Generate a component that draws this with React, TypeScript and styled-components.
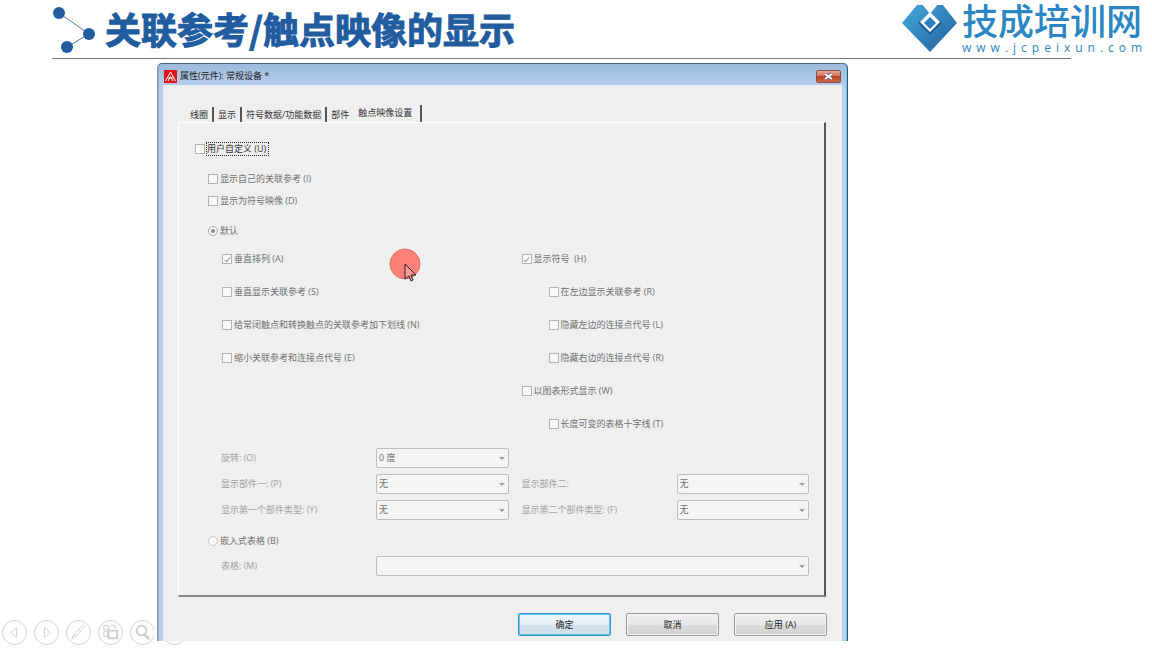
import React, { useId } from "react";
import styled, { createGlobalStyle, css } from "styled-components";

const GlobalStyle = createGlobalStyle`
  *, *::before, *::after { box-sizing: border-box; }
  body {
    margin: 0;
    background: #fff;
    font-family: "Open Sans", "Noto Sans CJK SC", sans-serif;
    font-size: 9px;
    line-height: 12px;
    color: #333;
  }
  button, select, input { font: inherit; color: inherit; }
`;

const Slide = styled.main`
  position: relative;
  min-height: 100vh;
`;

const Header = styled.header`
  display: flex;
  align-items: flex-start;
  justify-content: space-between;
  height: 58px;
  padding: 4px 10px 0 52px;
`;

const Heading = styled.div`
  display: flex;
  align-items: flex-start;
  gap: 10px;
`;

const Title = styled.h1`
  margin: 0;
  font-family: "Noto Sans CJK SC", sans-serif;
  font-size: 36px;
  line-height: 48px;
  font-weight: 700;
  color: #215c9f;
  -webkit-text-stroke: 1px #215c9f;
  white-space: nowrap;
`;

const Brand = styled.a`
  display: flex;
  gap: 4px;
  color: #2b86c3;
  text-decoration: none;
`;

const BrandText = styled.span`
  display: flex;
  flex-direction: column;
  width: 180px;
`;

const BrandName = styled.span`
  height: 36px;
  font-family: "Liberation Sans", "Noto Sans CJK SC", sans-serif;
  font-size: 36px;
  line-height: 38px;
  font-weight: 500;
  white-space: nowrap;
`;

const BrandUrl = styled.span`
  font-size: 12px;
  line-height: 16px;
  letter-spacing: 5px;
  white-space: nowrap;
`;

const Rule = styled.hr`
  height: 1px;
  margin: 0 81px 4px 52px;
  border: 0;
  background: #777;
`;

const Dialog = styled.section`
  position: relative;
  z-index: 1;
  margin: 0 304px 0 157px;
  padding: 0 5px;
  border-top: 1px solid #4e6475;
  border-left: 1px solid #8299ae;
  border-right: 1px solid #33566b;
  border-radius: 5px 5px 0 0;
  background: linear-gradient(#9dbbdc, #b9d0ec 24px, #b9d0ec);
  box-shadow: -3px 0 #fff, inset -1px 0 #6cc3e4, inset 1px 0 #93abc4;
`;

const TitleBar = styled.header`
  display: flex;
  align-items: center;
  gap: 3px;
  height: 21px;
  padding: 3px 1px 0;
  color: #222;
`;

const DialogTitle = styled.h2`
  flex: 1;
  margin: 0;
  font-size: 9px;
  font-weight: 400;
`;

const CloseButton = styled.button`
  display: grid;
  place-items: center;
  width: 25px;
  height: 13px;
  padding: 0;
  border: 1px solid #83503f;
  border-radius: 2px;
  background: linear-gradient(#e3a899, #d4755f 45%, #bf3f22 50%, #d2694c);
`;

const Body = styled.div`
  padding: 20px 15px 5px 15px;
  background: #efefef;
`;

const Tabs = styled.div`
  display: flex;
  align-items: flex-end;
  height: 17px;
  padding-left: 8px;
`;

const Tab = styled.button<{ $active?: boolean; $divider?: boolean }>`
  height: ${(p) => (p.$active ? 17 : 15)}px;
  padding: ${(p) => (p.$active ? "0 8px 2px 5px" : "0 4px")};
  border: 0;
  border-right: ${(p) => (p.$divider ? "2px solid #555" : "0")};
  background: none;
  white-space: nowrap;
`;

const Panel = styled.div`
  margin-right: 1px;
  padding: 20px 15px 19px 16px;
  border: 1px solid #fff;
  border-right: 2px solid #555;
  border-bottom: 2px solid #888;
`;

const Row = styled.div<{ $indent?: number; $gap?: number; $height?: number }>`
  display: flex;
  align-items: center;
  height: ${(p) => p.$height ?? 22}px;
  margin-top: ${(p) => p.$gap ?? 0}px;
  padding-left: ${(p) => p.$indent ?? 0}px;
`;

const Choice = styled.label<{ $focused?: boolean }>`
  display: flex;
  align-items: center;
  gap: 2px;
  color: ${(p) => (p.$focused ? "#333" : "#6f6f6f")};
  white-space: pre;
`;

const ChoiceText = styled.span<{ $focused?: boolean }>`
  ${(p) => p.$focused && css`
    padding-right: 2px;
    outline: 1px dotted #222;
  `}
`;

const Box = styled.input`
  appearance: none;
  display: grid;
  place-items: center;
  width: 10px;
  height: 10px;
  margin: 0;
  border: 1px solid #b4b4b4;
  background: #f9f9f9;

  &[type="radio"] {
    border-color: #c4c4c4;
    border-radius: 50%;
  }

  &[type="checkbox"]:checked::after {
    content: "";
    width: 3px;
    height: 6px;
    border: solid #999;
    border-width: 0 1px 1px 0;
    transform: rotate(40deg);
  }

  &[type="radio"]:checked { border-color: #aaa; }
  &[type="radio"]:checked::after {
    content: "";
    width: 4px;
    height: 4px;
    border-radius: 50%;
    background: #888;
  }
`;

const Options = styled.div`
  display: grid;
  grid-template-columns: 1fr 1fr;
  column-gap: 12px;
  padding-left: 27px;
`;

const Fields = styled.div<{ $top: number }>`
  display: grid;
  grid-template-columns: 1fr 1fr;
  gap: 6px 13px;
  padding: ${(p) => p.$top}px 0 0 26px;
`;

const Field = styled.div<{ $wide?: boolean }>`
  display: grid;
  grid-template-columns: 155px 1fr;
  align-items: center;
  color: #a2a2a2;
  ${(p) => p.$wide && css`grid-column: 1 / -1;`}
`;

const SelectFrame = styled.span`
  position: relative;
  display: block;

  &::after {
    content: "";
    position: absolute;
    top: 9px;
    right: 4px;
    border: 3px solid transparent;
    border-top-color: #a0a0a0;
    border-bottom: 0;
  }
`;

const Select = styled.select`
  appearance: none;
  display: block;
  width: 100%;
  height: 20px;
  padding: 0 2px;
  border: 1px solid #bdbdbd;
  border-radius: 2px;
  background: #f4f4f4;
  color: #6f6f6f;
  opacity: 1;
`;

const Actions = styled.footer`
  display: flex;
  justify-content: flex-end;
  gap: 15px;
  padding-top: 16px;
`;

const ActionButton = styled.button<{ $primary?: boolean }>`
  width: 93px;
  height: 23px;
  border: 1px solid ${(p) => (p.$primary ? "#3c96c4" : "#999")};
  border-radius: 2px;
  background: ${(p) => (p.$primary
    ? "linear-gradient(#eef4f8, #e4eef5 50%, #d3e2ed 50%, #cfdfea)"
    : "linear-gradient(#f0f0f0, #e8e8e8 50%, #dcdcdc 50%, #d2d2d2)")};
  box-shadow: ${(p) => (p.$primary ? "inset 0 0 0 1px #62c5ee" : "inset 0 0 0 1px #f4f4f4")};
  color: #222;
`;

const Pointer = styled.svg`
  position: absolute;
  top: 184px;
  left: 231px;
  pointer-events: none;
`;

const SlideControls = styled.nav`
  position: absolute;
  bottom: 3px;
  left: 2px;
  display: flex;
  gap: 7px;
`;

const ControlButton = styled.button`
  display: grid;
  place-items: center;
  width: 25px;
  height: 25px;
  padding: 0;
  border: 1px solid #d2d2d2;
  border-radius: 50%;
  background: #fff;
  color: #cfcfcf;
`;

type OptionProps = {
  label: string;
  type?: "checkbox" | "radio";
  checked?: boolean;
  enabled?: boolean;
};

function Option({ label, type = "checkbox", checked, enabled }: OptionProps) {
  return (
    <Choice $focused={enabled}>
      <Box type={type} name={type === "radio" ? "layout" : undefined} defaultChecked={checked} disabled={!enabled} />
      <ChoiceText $focused={enabled}>{label}</ChoiceText>
    </Choice>
  );
}

function SelectField({ label, value, wide }: { label: string; value: string; wide?: boolean }) {
  const id = useId();
  return (
    <Field $wide={wide}>
      <label htmlFor={id}>{label}</label>
      <SelectFrame>
        <Select id={id} disabled defaultValue={value}>
          <option value={value}>{value}</option>
        </Select>
      </SelectFrame>
    </Field>
  );
}

const tabs = [
  { label: "线圈", divider: true },
  { label: "显示", divider: true },
  { label: "符号数据/功能数据", divider: true },
  { label: "部件" },
  { label: "触点映像设置", divider: true, active: true },
];

const leftOptions = [
  { label: "垂直排列 (A)", checked: true },
  { label: "垂直显示关联参考 (S)" },
  { label: "给常闭触点和转换触点的关联参考加下划线 (N)" },
  { label: "缩小关联参考和连接点代号 (E)" },
];

const rightOptions = [
  { label: "显示符号  (H)", checked: true },
  { label: "在左边显示关联参考 (R)", nested: true },
  { label: "隐藏左边的连接点代号 (L)", nested: true },
  { label: "隐藏右边的连接点代号 (R)", nested: true },
  { label: "以图表形式显示 (W)" },
  { label: "长度可变的表格十字线 (T)", nested: true },
];

const controls = [
  { label: "上一张", icon: <path d="M14 7v10l-6-5z" /> },
  { label: "下一张", icon: <path d="M10 7v10l6-5z" /> },
  { label: "画笔", icon: <path d="M5 19l2-5L17 4l2 2L9 16L5 19M7 14l2 2M12 9l2 2" /> },
  {
    label: "所有幻灯片",
    icon: (
      <>
        <path d="M5 5h5v4H5zM12 5h5v3M5 11h4v5H5z" />
        <path d="M10 10h9v8h-9z" strokeWidth="2" />
      </>
    ),
  },
  {
    label: "放大",
    icon: (
      <>
        <circle cx="11" cy="10" r="5" strokeWidth="2" />
        <path d="M14 14l5 5" strokeWidth="3" />
      </>
    ),
  },
  { label: "更多", icon: <path d="M7 12h1M12 12h1M17 12h1" /> },
];

export default function App() {
  return (
    <Slide>
      <GlobalStyle />
      <Header>
        <Heading>
          <svg width="43" height="50" viewBox="52 4 43 50" aria-hidden="true">
            <path d="M59 13L89 34L67 47" fill="none" stroke="#4c7bb0" />
            <g fill="#215c9f">
              <circle cx="59" cy="13" r="6" />
              <circle cx="89" cy="34" r="6" />
              <circle cx="67" cy="47" r="6" />
            </g>
          </svg>
          <Title>关联参考/触点映像的显示</Title>
        </Heading>
        <Brand href="#">
          <svg width="56" height="50" viewBox="902 4 56 50" aria-hidden="true">
            <defs>
              <linearGradient id="mark" x1="0" y1="0" x2="1" y2="1">
                <stop offset="0" stopColor="#43a9dc" />
                <stop offset="1" stopColor="#205f9e" />
              </linearGradient>
            </defs>
            <path d="M902 23L917 5H923L930 12L937 5H943L957 23L930 52z" fill="url(#mark)" />
            <path d="M930 35L942 23L940 21L930 31L920 21L918 23z" fill="#1f5c98" />
            <path d="M922 4H938L930 14z" fill="#fff" />
            <path d="M930 12L940 22L930 32L920 22z" fill="#fff" />
            <path d="M930 17L936 23L930 29L924 23z" fill="#2b7fc0" />
          </svg>
          <BrandText>
            <BrandName>技成培训网</BrandName>
            <BrandUrl>www.jcpeixun.com</BrandUrl>
          </BrandText>
        </Brand>
      </Header>
      <Rule />

      <Dialog aria-labelledby="dialog-title">
        <TitleBar>
          <svg width="13" height="13" viewBox="0 0 13 13" aria-hidden="true">
            <rect width="13" height="13" fill="#e0161f" />
            <path d="M1.500 11L6.500 2L11.500 11M4 11L6.500 6.500L9 11M4 8h5" fill="none" stroke="#fff" />
          </svg>
          <DialogTitle id="dialog-title">属性(元件): 常规设备 *</DialogTitle>
          <CloseButton aria-label="关闭">
            <svg width="9" height="7" viewBox="0 0 9 7" aria-hidden="true">
              <path d="M1 1L8 6M8 1L1 6" stroke="#555" strokeWidth="3" />
              <path d="M1 1L8 6M8 1L1 6" stroke="#fff" strokeWidth="2" />
            </svg>
          </CloseButton>
        </TitleBar>
        <Body>
          <Tabs role="tablist">
            {tabs.map((tab) => (
              <Tab key={tab.label} role="tab" aria-selected={!!tab.active} $active={tab.active} $divider={tab.divider}>
                {tab.label}
              </Tab>
            ))}
          </Tabs>
          <Panel role="tabpanel">
            <Row $height={12}>
              <Option label="用户自定义 (U)" enabled />
            </Row>
            <Row $gap={13} $indent={13}>
              <Option label="显示自己的关联参考 (I)" />
            </Row>
            <Row $indent={13}>
              <Option label="显示为符号映像 (D)" />
            </Row>
            <Row $gap={8} $indent={13}>
              <Option type="radio" label="默认" checked />
            </Row>
            <Options>
              <div>
                {leftOptions.map((option) => (
                  <Row key={option.label} $height={33}>
                    <Option label={option.label} checked={option.checked} />
                  </Row>
                ))}
              </div>
              <div>
                {rightOptions.map((option) => (
                  <Row key={option.label} $height={33} $indent={option.nested ? 27 : 0}>
                    <Option label={option.label} checked={option.checked} />
                  </Row>
                ))}
              </div>
            </Options>
            <Fields $top={8}>
              <SelectField label="旋转: (O)" value="0 度" />
              <span />
              <SelectField label="显示部件一: (P)" value="无" />
              <SelectField label="显示部件二:" value="无" />
              <SelectField label="显示第一个部件类型: (Y)" value="无" />
              <SelectField label="显示第二个部件类型: (F)" value="无" />
            </Fields>
            <Row $gap={10} $indent={13}>
              <Option type="radio" label="嵌入式表格 (B)" />
            </Row>
            <Fields $top={4}>
              <SelectField label="表格: (M)" value="" wide />
            </Fields>
          </Panel>
          <Actions>
            <ActionButton $primary>确定</ActionButton>
            <ActionButton>取消</ActionButton>
            <ActionButton>应用 (A)</ActionButton>
          </Actions>
        </Body>
        <Pointer width="32" height="36" viewBox="0 0 32 36" aria-hidden="true">
          <circle cx="16" cy="16" r="15" fill="#ff8078" stroke="#d9726b" />
          <path d="M16 16V31L20 28L22 33L24 32L22 27H27z" fill="#ff9b94" stroke="#222" />
        </Pointer>
      </Dialog>

      <SlideControls aria-label="放映控制">
        {controls.map((control) => (
          <ControlButton key={control.label} aria-label={control.label}>
            <svg width="23" height="23" viewBox="0 0 24 24" fill="none" stroke="currentColor">
              {control.icon}
            </svg>
          </ControlButton>
        ))}
      </SlideControls>
    </Slide>
  );
}
